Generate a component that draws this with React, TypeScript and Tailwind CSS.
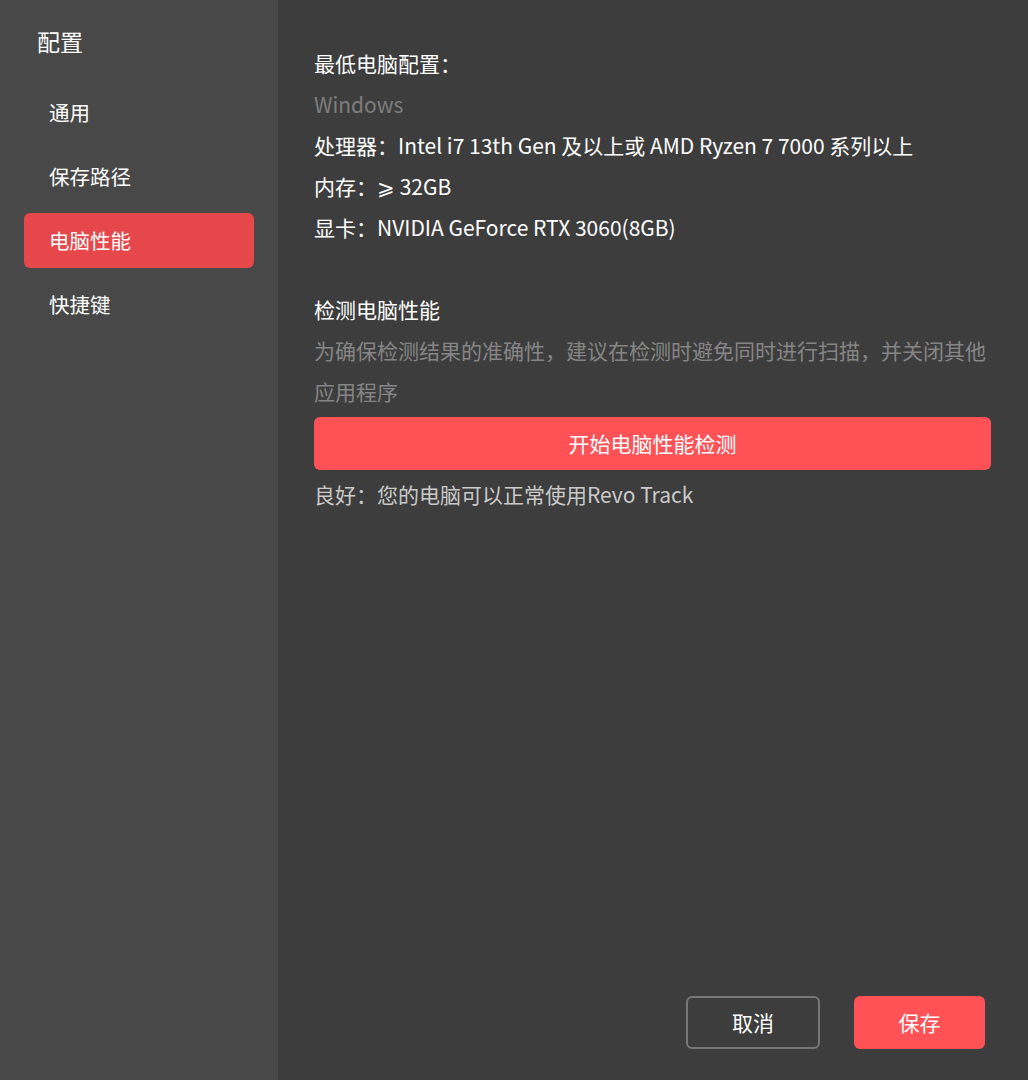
const menu = ['通用', '保存路径', '电脑性能', '快捷键']

export default function App() {
  const active = '电脑性能'
  return (
    <div
      className="flex h-[1080px] w-[1028px] overflow-hidden bg-[#3d3d3d] text-[21px] leading-[41px] text-white"
      style={{ fontFamily: '"Noto Sans CJK SC", "Noto Sans", sans-serif' }}
    >
      <aside className="flex w-[278px] shrink-0 flex-col bg-[#484848] px-[24px] pt-[20px]">
        <h1 className="pl-[13px] text-[23px] leading-[42px]">配置</h1>
        <nav className="mt-[23px] flex flex-col gap-[9px]">
          {menu.map((m) => (
            <div
              key={m}
              className={
                m === active
                  ? 'flex h-[55px] items-center rounded-[6px] bg-[#e5474a] pl-[25px] text-[20.5px]'
                  : 'flex h-[55px] items-center rounded-[6px] pl-[25px] text-[20.5px]'
              }
            >
              {m}
            </div>
          ))}
        </nav>
      </aside>

      <main className="flex flex-1 flex-col pl-[36px] pr-[37px] pt-[43px] pb-[31px]">
        <section>
          <p>最低电脑配置：</p>
          <p className="text-[#7d7d7d]">Windows</p>
          <p>处理器：Intel i7 13th Gen 及以上或 AMD Ryzen 7 7000 系列以上</p>
          <p>内存：⩾ 32GB</p>
          <p>显卡：NVIDIA GeForce RTX 3060(8GB)</p>
        </section>

        <section className="mt-[41px]">
          <p>检测电脑性能</p>
          <p className="text-[#858585]">为确保检测结果的准确性，建议在检测时避免同时进行扫描，并关闭其他应用程序</p>
          <button className="mt-[5px] flex h-[53px] w-full items-center justify-center rounded-[6px] bg-[#ff5257] text-white">
            开始电脑性能检测
          </button>
          <p className="mt-[4px] text-[#c9c9c9]">良好：您的电脑可以正常使用Revo Track</p>
        </section>

        <div className="mt-auto flex justify-end gap-[34px] pr-[6px]">
          <button className="h-[53px] w-[134px] rounded-[6px] border-2 border-[#777777] text-white">取消</button>
          <button className="h-[53px] w-[131px] rounded-[6px] bg-[#ff5257] text-white">保存</button>
        </div>
      </main>
    </div>
  )
}
